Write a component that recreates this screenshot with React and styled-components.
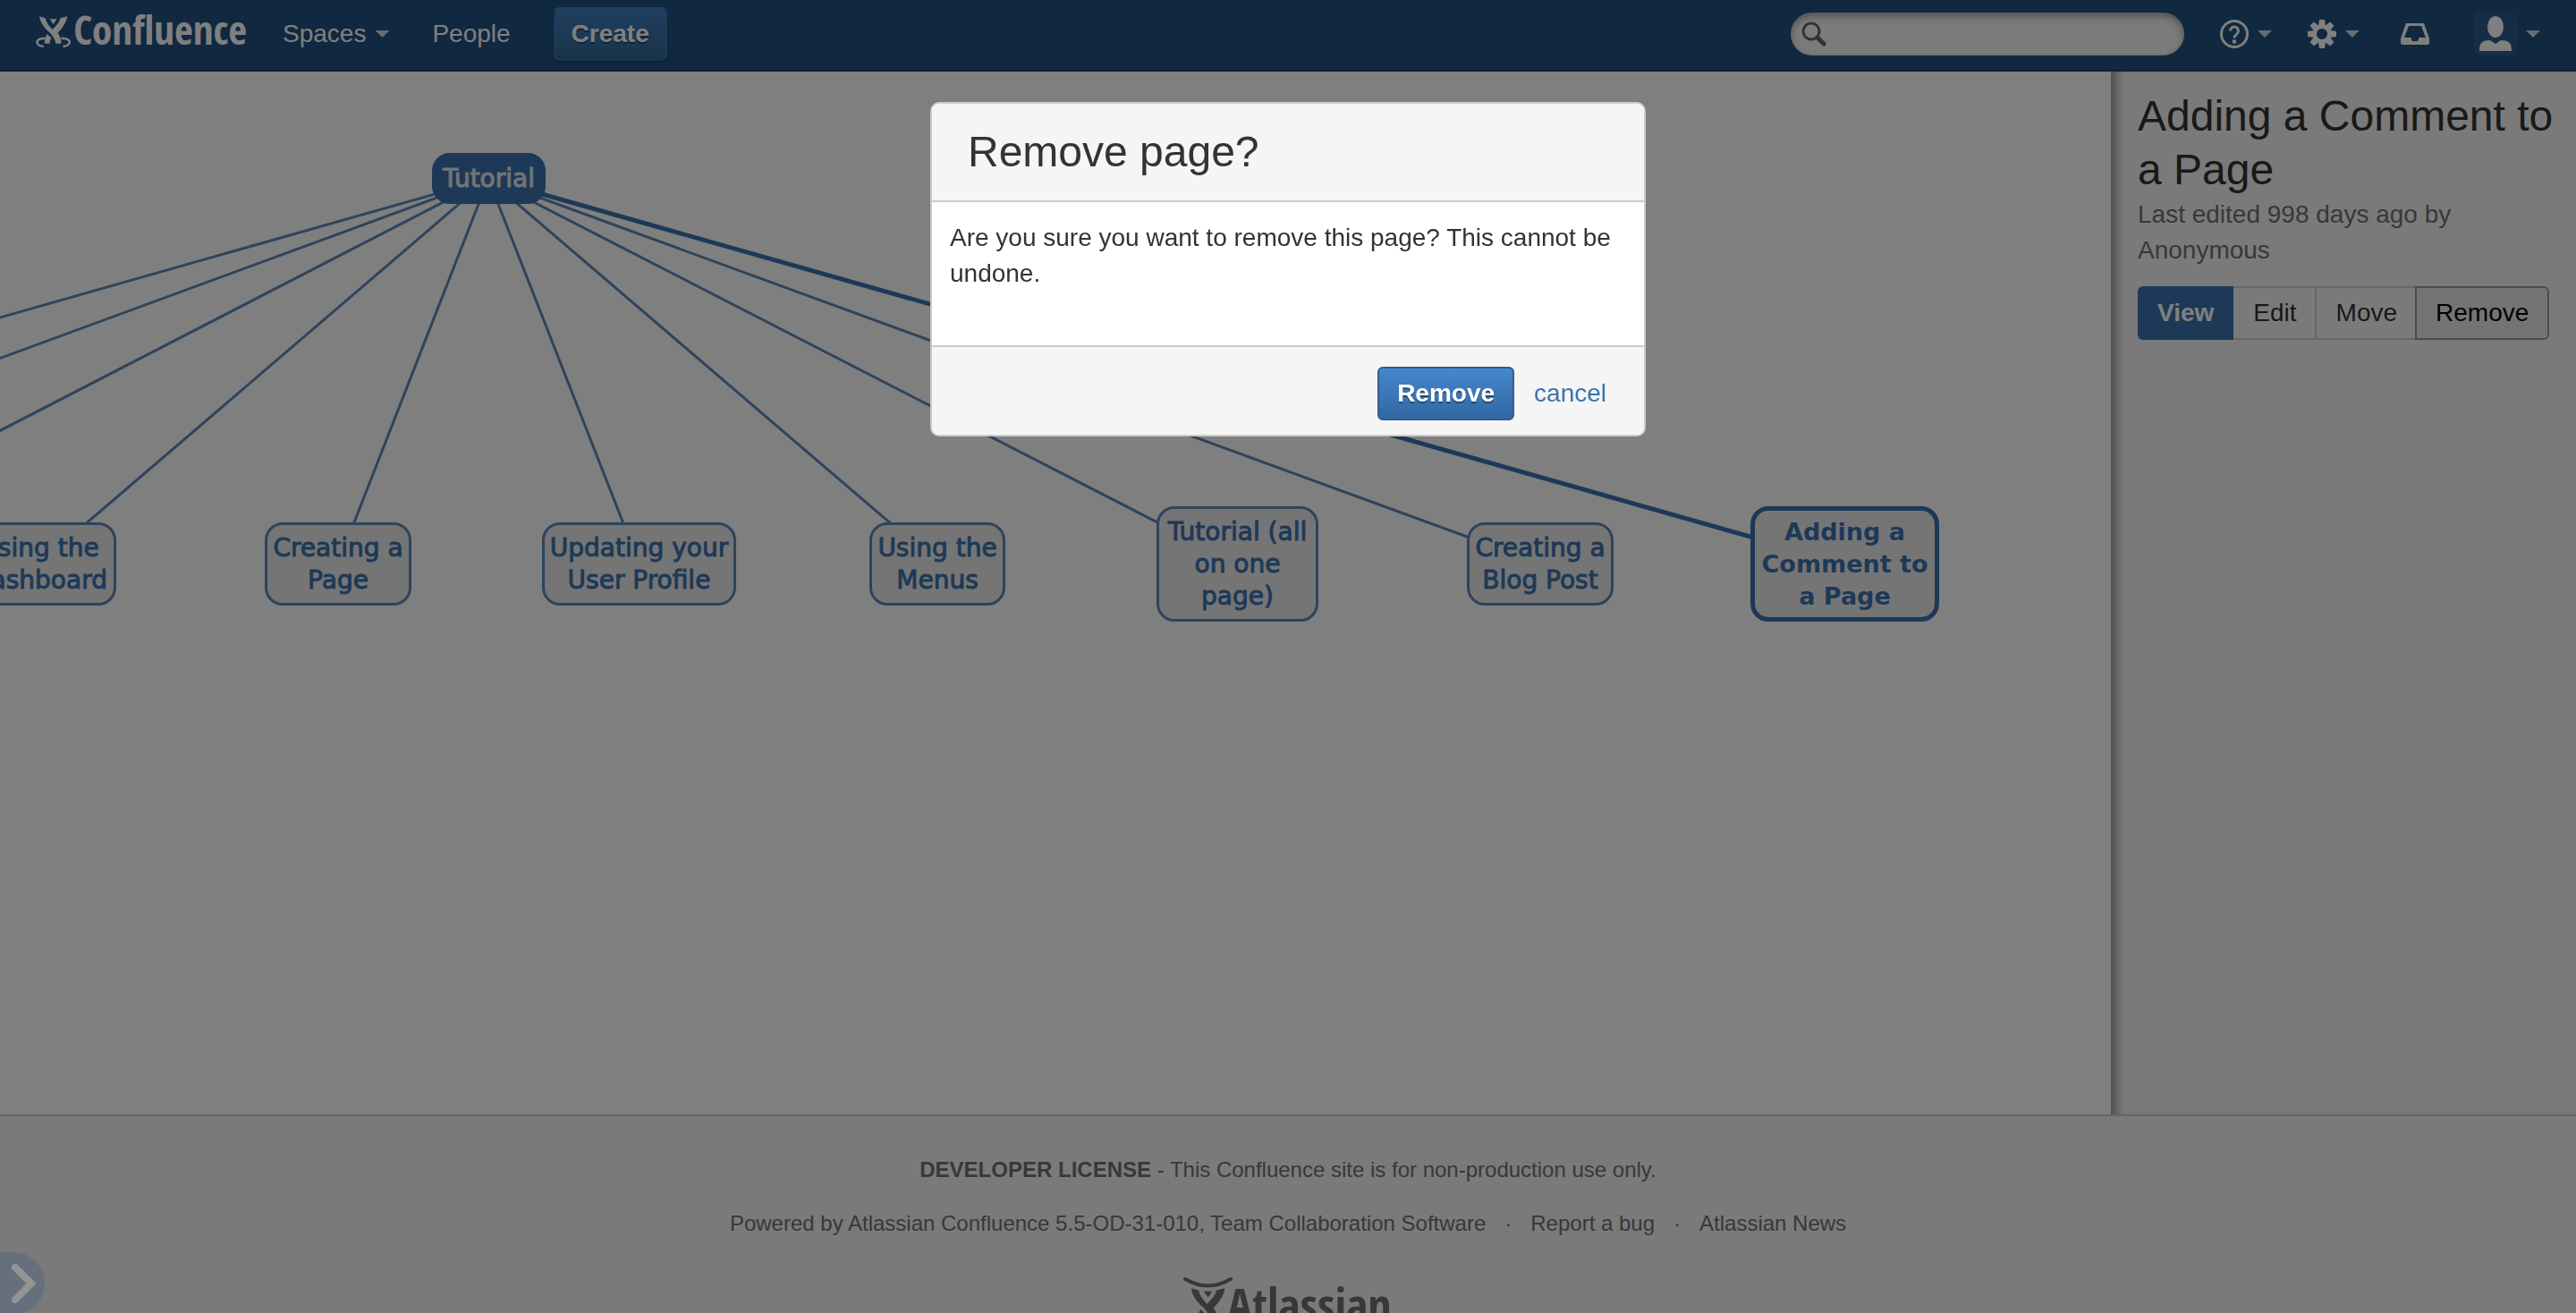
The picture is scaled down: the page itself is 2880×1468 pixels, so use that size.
import React from "react";
import styled, { createGlobalStyle } from "styled-components";

const sans = '"Liberation Sans", Arial, sans-serif';
const brandFont = '"Liberation Sans Narrow", "Open Sans Condensed", "Roboto Condensed", Roboto, sans-serif';
const blue = "#3b73af";

const GlobalStyle = createGlobalStyle`
  *, *::before, *::after { box-sizing: border-box; }
  body { margin: 0; font: 28px/40px ${sans}; color: #333; background: #f5f5f5; }
  h1, h2, p, ul { margin: 0; padding: 0; font-weight: normal; }
  a { color: inherit; text-decoration: none; }
  button, input { font: inherit; color: inherit; }
  button { cursor: pointer; }
  svg { display: block; }
`;

const Page = styled.div`
  display: flex;
  flex-direction: column;
  height: 100vh;
  overflow: hidden;
`;

const Header = styled.header`
  flex: none;
  display: flex;
  align-items: center;
  justify-content: space-between;
  padding: 0 40px;
  height: 80px;
  padding-bottom: 2px;
  background: #205081;
  border-bottom: 2px solid #2e3d54;
  color: #fff;
`;

const Group = styled.nav`
  display: flex;
  align-items: center;
`;

const Brand = styled.a`
  display: flex;
  align-items: center;
  gap: 3px;
  width: 236px;
  padding-bottom: 6px;
  font: bold 45px/48px ${brandFont};
  white-space: nowrap;
  span { padding-bottom: 4px; }
`;

const NavItem = styled.a`
  display: flex;
  align-items: center;
  gap: 10px;
  margin-left: ${(p) => p.$gap}px;
`;

const Caret = styled.span`
  width: 16px;
  height: 8px;
  background: #d2dae3;
  clip-path: polygon(0 0, 100% 0, 50% 100%);
`;

const Button = styled.button`
  height: 60px;
  padding: 0 20px;
  border: 2px solid #345d8b;
  border-radius: 6px;
  background: linear-gradient(#4687ce, #3068a2);
  color: #fff;
  font-weight: bold;
  text-shadow: 0 2px 0 rgba(0, 0, 0, 0.4);
`;

const CreateButton = styled(Button)`
  margin-left: 48px;
  padding: 0 18px;
  border-color: #4280bd #3b73ab #336697;
  background: linear-gradient(#4080c0, #336697);
  box-shadow: 0 2px 2px rgba(0, 0, 0, 0.25);
`;

const Search = styled.label`
  display: flex;
  align-items: center;
  gap: 8px;
  width: 440px;
  height: 48px;
  padding: 0 12px;
  border-radius: 24px;
  background: #f6f6f6;
  box-shadow: inset 0 4px 8px rgba(0, 0, 0, 0.35);
`;

const SearchInput = styled.input`
  flex: 1;
  min-width: 0;
  border: 0;
  outline: 0;
  background: none;
  color: #333;
`;

const IconButton = styled.button`
  display: flex;
  align-items: center;
  gap: 10px;
  margin-left: ${(p) => p.$gap}px;
  padding: 0;
  border: 0;
  background: none;
  color: #fff;
`;

const Avatar = styled.span`
  width: 48px;
  height: 48px;
  border-radius: 6px;
  background: #2b5c8f;
`;

const Content = styled.div`
  flex: 1;
  min-height: 0;
  display: flex;
`;

const Canvas = styled.main`
  position: relative;
  flex: 1;
  min-width: 0;
  overflow: hidden;
  background: #fff;
`;

const Edges = styled.svg`
  position: absolute;
  inset: 0;
  width: 100%;
  height: 100%;
`;

const Node = styled.a`
  position: absolute;
  left: ${(p) => p.$x}px;
  top: ${(p) => p.$y}px;
  width: ${(p) => p.$w}px;
  height: ${(p) => p.$h}px;
  display: flex;
  align-items: center;
  justify-content: center;
  border: ${(p) => (p.$selected ? "5px solid #3b73af" : "3px solid #5c88b8")};
  border-radius: 20px;
  background: ${(p) => (p.$root ? blue : "#ebebeb")};
  ${(p) => p.$root && "border-color: #3b73af;"}
  color: ${(p) => (p.$root ? "#e4e9ef" : blue)};
  font: ${(p) => (p.$selected ? "bold 27px" : "28px")}/36px "DejaVu Sans", Verdana, sans-serif;
  ${(p) => !p.$selected && "-webkit-text-stroke: 1px currentColor;"}
  text-align: center;
  white-space: pre;
`;

const Sidebar = styled.aside`
  flex: none;
  width: 520px;
  padding: 20px 20px 20px 30px;
  background: #f5f5f5;
  box-shadow: inset 12px 0 12px -6px rgba(0, 0, 0, 0.4);
`;

const SideTitle = styled.h1`
  font-size: 48px;
  line-height: 60px;
`;

const Meta = styled.p`
  color: #707070;
`;

const ButtonGroup = styled.div`
  display: flex;
  margin-top: 20px;
`;

const Tool = styled.button`
  height: 60px;
  padding: 0 20px 0 22px;
  border: 2px solid #ccc;
  border-left: 0;
  background: #f5f5f5;
  &:first-child {
    padding: 0 22px;
    border: 0;
    border-radius: 6px 0 0 6px;
    background: ${blue};
    color: #fff;
    font-weight: bold;
  }
  &:last-child {
    margin-left: -2px;
    padding: 0 21px;
    border: 2px solid #999;
    border-radius: 0 6px 6px 0;
    background: #e9e9e9;
    color: #000;
  }
`;

const Footer = styled.footer`
  flex: 0 0 222px;
  display: flex;
  flex-direction: column;
  align-items: center;
  gap: 20px;
  padding-top: 40px;
  overflow: hidden;
  border-top: 2px solid #ccc;
  background: #f5f5f5;
  color: #707070;
  font-size: 24px;
`;

const FooterLinks = styled.ul`
  display: flex;
  list-style: none;
  li + li::before {
    content: "·";
    margin: 0 21px;
  }
`;

const Atlassian = styled.a`
  display: flex;
  align-items: flex-start;
  margin-top: 20px;
  font: bold 52px/60px ${brandFont};
`;

const Overlay = styled.div`
  position: fixed;
  inset: 0;
  display: flex;
  align-items: flex-start;
  justify-content: center;
  padding-top: 114px;
  background: rgba(0, 0, 0, 0.5);
`;

const Dialog = styled.section`
  width: 800px;
  border: 2px solid #ccc;
  border-radius: 10px;
  overflow: hidden;
  background: #fff;
`;

const DialogTitle = styled.h2`
  padding: 24px 40px;
  border-bottom: 2px solid #ccc;
  background: #f5f5f5;
  font-size: 48px;
  line-height: 60px;
`;

const DialogBody = styled.p`
  min-height: 160px;
  padding: 20px;
`;

const DialogActions = styled.div`
  display: flex;
  align-items: center;
  justify-content: flex-end;
  gap: 22px;
  padding: 22px 42px 16px;
  border-top: 2px solid #ccc;
  background: #f5f5f5;
`;

const CancelLink = styled.a`
  color: ${blue};
`;

const Handle = styled.button`
  position: fixed;
  left: 0;
  bottom: -2px;
  width: 50px;
  height: 70px;
  padding: 0 0 0 12px;
  border: 0;
  border-radius: 0 35px 35px 0;
  background: #66707c;
`;

const figure = (
  <>
    <path d="M4 1 11 3C12 8 15 12 19 16 23 12 27 8 28 3L36 1C35 8 30 15 25 20 28 23 29 27 29 32H23C22 27 18 21 12 16 8 12 5 7 4 1Z" />
    <path d="M16 4h8l-4 6Z" />
    <path d="M13 21 18 26C16 28 16 30 16 32H10C10 29 11 24 13 21Z" />
  </>
);

const ConfluenceMark = () => (
  <svg width="40" height="36" viewBox="0 0 40 36" fill="currentColor" aria-hidden="true">
    {figure}
    <path d="M11 26C3 26 0 29 2 32 3 34 6 35 9 35M29 26c8 0 11 3 9 6-1 2-4 3-7 3" fill="none" stroke="currentColor" strokeWidth="2.500" />
  </svg>
);

const AtlassianMark = () => (
  <svg width="48" height="56" viewBox="0 0 48 56" overflow="visible" fill="currentColor" aria-hidden="true">
    <path d="M1 2C18 12 35 12 52 2" fill="none" stroke="currentColor" strokeWidth="4" strokeLinecap="round" />
    <g transform="translate(3 11) scale(1.18)">{figure}</g>
  </svg>
);

const root = { x: 483, y: 91, w: 127, h: 57 };
const pages = [
  { label: "Using the\nDashboard", x: -42, y: 504, w: 172, h: 93 },
  { label: "Creating a\nPage", x: 296, y: 504, w: 164, h: 93 },
  { label: "Updating your\nUser Profile", x: 606, y: 504, w: 217, h: 93 },
  { label: "Using the\nMenus", x: 972, y: 504, w: 152, h: 93 },
  { label: "Tutorial (all\non one\npage)", x: 1293, y: 486, w: 181, h: 129 },
  { label: "Creating a\nBlog Post", x: 1640, y: 504, w: 164, h: 93 },
  { label: "Adding a\nComment to\na Page", x: 1957, y: 486, w: 211, h: 129, selected: true },
];
const offscreen = [-969, -625, -288];

export default function App() {
  const line = (x, selected) => (
    <line key={x} x1="546" y1="120" x2={x} y2="550" stroke={selected ? "#3b73af" : "#5c88b8"} strokeWidth={selected ? 5 : 3} />
  );
  return (
    <>
      <GlobalStyle />
      <Page>
        <Header>
          <Group aria-label="Main">
            <Brand href="#"><ConfluenceMark /><span>Confluence</span></Brand>
            <NavItem href="#" $gap={40}>Spaces<Caret /></NavItem>
            <NavItem href="#" $gap={48}>People</NavItem>
            <CreateButton>Create</CreateButton>
          </Group>
          <Group aria-label="Tools">
            <Search>
              <svg width="28" height="28" viewBox="0 0 28 28" fill="none" stroke="#666" aria-hidden="true">
                <circle cx="11" cy="11" r="9" strokeWidth="3" />
                <path d="m18 18 7 7" strokeWidth="5" strokeLinecap="round" />
              </svg>
              <SearchInput type="text" aria-label="Search" />
            </Search>
            <IconButton $gap={40} aria-label="Help">
              <svg width="32" height="32" viewBox="0 0 32 32" fill="none" stroke="currentColor" strokeWidth="3" aria-hidden="true">
                <circle cx="16" cy="16" r="14.5" />
                <path d="M11.500 12.500a4.500 4.500 0 1 1 7.500 3.300c-2 1.600-3 2.400-3 4.700" />
                <path d="M16 22.500v4" strokeWidth="4" />
              </svg>
              <Caret />
            </IconButton>
            <IconButton $gap={40} aria-label="Settings">
              <svg width="32" height="32" viewBox="0 0 32 32" aria-hidden="true">
                <g fill="currentColor">
                  {[0, 45, 90, 135].map((a) => (
                    <path key={a} d="M13 0h6l1 7v18l-1 7h-6l-1-7V7Z" transform={`rotate(${a} 16 16)`} />
                  ))}
                </g>
                <circle cx="16" cy="16" r="6" fill="#205081" />
              </svg>
              <Caret />
            </IconButton>
            <IconButton $gap={46} aria-label="Notifications">
              <svg width="32" height="32" viewBox="0 0 32 32" aria-hidden="true">
                <path fill="currentColor" fillRule="evenodd" d="M6 4h20l6 17v5a2 2 0 0 1-2 2H2a2 2 0 0 1-2-2v-5ZM9 7 4 20h8v2a2 2 0 0 0 2 2h4a2 2 0 0 0 2-2v-2h8L23 7Z" />
              </svg>
            </IconButton>
            <IconButton $gap={50} aria-label="Profile">
              <Avatar>
                <svg width="48" height="48" viewBox="0 0 48 48" fill="currentColor" aria-hidden="true">
                  <ellipse cx="24" cy="16" rx="9" ry="12" />
                  <path d="M6 43c0-8 2-12 12-12l6 4 6-4c10 0 12 4 12 12Z" />
                </svg>
              </Avatar>
              <Caret />
            </IconButton>
          </Group>
        </Header>
        <Content>
          <Canvas>
            <Edges aria-hidden="true">
              {offscreen.map((x) => line(x))}
              {pages.map((p) => line(p.x + p.w / 2, p.selected))}
            </Edges>
            <Node href="#" $root $x={root.x} $y={root.y} $w={root.w} $h={root.h}>Tutorial</Node>
            {pages.map((p) => (
              <Node key={p.label} href="#" $x={p.x} $y={p.y} $w={p.w} $h={p.h} $selected={p.selected}>{p.label}</Node>
            ))}
          </Canvas>
          <Sidebar>
            <SideTitle>Adding a Comment to a Page</SideTitle>
            <Meta>Last edited 998 days ago by Anonymous</Meta>
            <ButtonGroup>
              <Tool>View</Tool>
              <Tool>Edit</Tool>
              <Tool>Move</Tool>
              <Tool>Remove</Tool>
            </ButtonGroup>
          </Sidebar>
        </Content>
        <Footer>
          <p><strong>DEVELOPER LICENSE</strong> - This Confluence site is for non-production use only.</p>
          <FooterLinks>
            <li>Powered by <a href="#">Atlassian Confluence</a> 5.5-OD-31-010, <a href="#">Team Collaboration Software</a></li>
            <li><a href="#">Report a bug</a></li>
            <li><a href="#">Atlassian News</a></li>
          </FooterLinks>
          <Atlassian href="#"><AtlassianMark /><span>Atlassian</span></Atlassian>
        </Footer>
      </Page>
      <Overlay>
        <Dialog role="dialog" aria-modal="true" aria-labelledby="remove-title">
          <DialogTitle id="remove-title">Remove page?</DialogTitle>
          <DialogBody>Are you sure you want to remove this page? This cannot be undone.</DialogBody>
          <DialogActions>
            <Button>Remove</Button>
            <CancelLink href="#">cancel</CancelLink>
          </DialogActions>
        </Dialog>
      </Overlay>
      <Handle aria-label="Expand">
        <svg width="30" height="44" viewBox="0 0 30 44" fill="none" stroke="#949494" strokeWidth="8" strokeLinecap="round" aria-hidden="true">
          <path d="m5 4 18 18L5 40" />
        </svg>
      </Handle>
    </>
  );
}
